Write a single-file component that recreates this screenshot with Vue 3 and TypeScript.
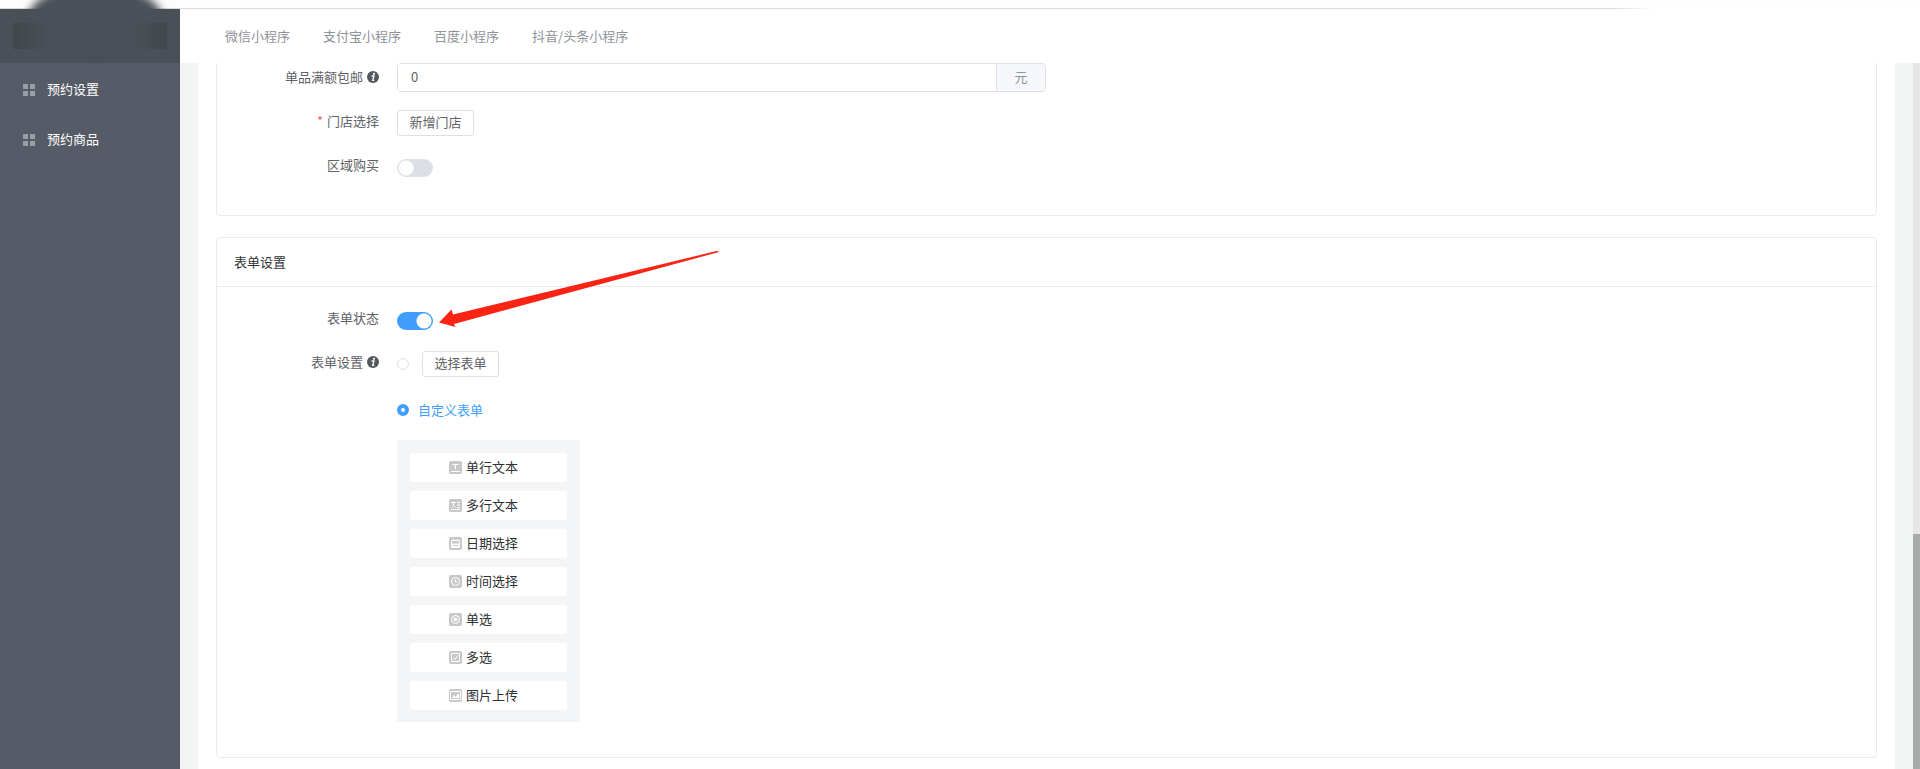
<script setup lang="ts">
import { ref } from 'vue'

interface FieldType {
  key: string
  label: string
}

const tabs: string[] = ['微信小程序', '支付宝小程序', '百度小程序', '抖音/头条小程序']
const menu: string[] = ['预约设置', '预约商品']
const fieldTypes: FieldType[] = [
  { key: 'text', label: '单行文本' },
  { key: 'textarea', label: '多行文本' },
  { key: 'date', label: '日期选择' },
  { key: 'time', label: '时间选择' },
  { key: 'radio', label: '单选' },
  { key: 'check', label: '多选' },
  { key: 'image', label: '图片上传' },
]

const freeShipping = ref('0')
const areaLimit = ref(false)
const formEnabled = ref(true)
const formMode = ref('custom')
</script>

<template>
  <div class="page">
    <div class="topbar"></div>
    <div class="shell">
      <aside class="sidebar">
        <div class="brand">
          <div class="brand-halo"></div>
          <div class="brand-box"></div>
        </div>
        <nav class="menu">
          <a v-for="item in menu" :key="item" href="#" class="menu-item">
            <svg class="menu-icon" viewBox="0 0 12 12" aria-hidden="true">
              <path d="M0 0h5v5H0zM7 0h5v5H7zM0 7h5v5H0zM7 7h5v5H7z" fill="#9a9ea5" />
            </svg>
            <span class="caption">{{ item }}</span>
          </a>
        </nav>
      </aside>

      <div class="main">
        <nav class="tabs">
          <a v-for="tab in tabs" :key="tab" href="#" class="tab">{{ tab }}</a>
        </nav>

        <div class="viewport">
          <main class="content">
            <section class="card card-continued">
              <div class="form">
                <div class="row">
                  <label class="label label-tall" for="free-shipping">
                    单品满额包邮
                    <svg class="info" viewBox="0 0 12 12" aria-hidden="true">
                      <circle cx="6" cy="6" r="6" fill="#55585d" />
                      <circle cx="7" cy="2.8" r="1.1" fill="#fff" />
                      <path d="M4.6 5h2.4L5.7 9.4h1.5" fill="none" stroke="#fff" stroke-width="1.3" />
                    </svg>
                  </label>
                  <div class="input-group">
                    <input id="free-shipping" v-model="freeShipping" type="text" class="input" />
                    <span class="unit">元</span>
                  </div>
                </div>
                <div class="row">
                  <span class="label"><span class="required">*</span>门店选择</span>
                  <button type="button" class="button">新增门店</button>
                </div>
                <div class="row">
                  <label class="label" for="area-limit">区域购买</label>
                  <input id="area-limit" v-model="areaLimit" type="checkbox" role="switch" class="switch" />
                </div>
              </div>
            </section>

            <section class="card">
              <h2 class="card-title">表单设置</h2>
              <div class="form form-padded">
                <div class="row">
                  <label class="label" for="form-enabled">表单状态</label>
                  <div class="pointed">
                    <input id="form-enabled" v-model="formEnabled" type="checkbox" role="switch" class="switch" />
                    <svg class="arrow" viewBox="438 250 282 78" aria-hidden="true">
                      <path d="M439 322.5L451.5 309.5L453 314.5L717.500 250.800L719 252L454 324L455.500 327Z" fill="#fb2314" />
                    </svg>
                  </div>
                </div>
                <div class="row">
                  <span class="label">
                    表单设置
                    <svg class="info" viewBox="0 0 12 12" aria-hidden="true">
                      <circle cx="6" cy="6" r="6" fill="#55585d" />
                      <circle cx="7" cy="2.8" r="1.1" fill="#fff" />
                      <path d="M4.6 5h2.4L5.7 9.4h1.5" fill="none" stroke="#fff" stroke-width="1.3" />
                    </svg>
                  </span>
                  <div class="options">
                    <div class="option option-existing">
                      <input v-model="formMode" type="radio" name="form-mode" value="existing" class="radio" aria-label="选择表单" />
                      <button type="button" class="button">选择表单</button>
                    </div>
                    <label class="option option-custom">
                      <input v-model="formMode" type="radio" name="form-mode" value="custom" class="radio" />
                      自定义表单
                    </label>
                    <div class="palette">
                      <button v-for="field in fieldTypes" :key="field.key" type="button" class="field">
                        <svg class="field-icon" viewBox="0 0 13 13" aria-hidden="true">
                          <rect width="13" height="13" rx="2" fill="#c8c8c8" />
                          <g fill="none" stroke="#fff" stroke-width="1">
                            <path v-if="field.key === 'text'" d="M3.5 3.5h6M6.5 3.5v5M2 10.5h9" />
                            <path v-else-if="field.key === 'textarea'" d="M2 3.5h5M4.5 3.5v3M2.5 8.5l2-2 2 2M8 3.5h3M8 6h3M8 8.5h3M2 10.5h9" />
                            <g v-else-if="field.key === 'date'">
                              <path d="M2.5 3.5h8v7h-8zM4.5 2v2M8.5 2v2" />
                              <path d="M3 6.5h7v4H3z" fill="#fff" stroke="none" />
                              <path d="M4 8.5h5" stroke="#c8c8c8" />
                            </g>
                            <g v-else-if="field.key === 'time'">
                              <circle cx="6.5" cy="6.5" r="4" />
                              <path d="M6.500 4.500v2.500h2" />
                            </g>
                            <g v-else-if="field.key === 'radio'">
                              <circle cx="6.5" cy="6.5" r="4" />
                              <circle cx="6.5" cy="6.5" r="2" fill="#fff" stroke="none" />
                            </g>
                            <path v-else-if="field.key === 'check'" d="M2.5 2.5h8v8h-8zM4.5 6.5l1.5 2 3-4" />
                            <g v-else>
                              <path d="M1.5 2.5h10v8h-10z" />
                              <path d="M3 9l2-3 2 2 1.500-3L10 5v4z" fill="#fff" stroke="none" />
                            </g>
                          </g>
                        </svg>
                        <span class="caption">{{ field.label }}</span>
                      </button>
                    </div>
                  </div>
                </div>
              </div>
            </section>
          </main>
          <div class="scroll-track"><div class="scroll-thumb"></div></div>
        </div>
      </div>
    </div>
  </div>
</template>

<style>
body {
  margin: 0;
}
</style>

<style scoped>
.page,
.page * {
  box-sizing: border-box;
}

.page {
  display: flex;
  flex-direction: column;
  min-height: 100vh;
  overflow: hidden;
  background: #fff;
  color: #606266;
  font-family: "Noto Sans CJK SC", sans-serif;
  font-size: 13px;
  line-height: 22px;
}

.page a {
  text-decoration: none;
}

.page button,
.page input {
  margin: 0;
  font: inherit;
}

.topbar {
  height: 9px;
  background:
    linear-gradient(to right, #d8dadb 84%, transparent 86%) bottom / 100% 1px no-repeat,
    #fdfdfd;
}

.shell {
  display: flex;
  flex: 1;
}

.sidebar {
  flex: 0 0 180px;
  background: #565c67;
}

.brand {
  position: relative;
  height: 54px;
  padding: 14px 13px;
  background: #495057;
}

.brand-halo {
  position: absolute;
  top: -24px;
  left: 28px;
  width: 134px;
  height: 66px;
  border-radius: 50%;
  background: #495057;
  filter: blur(4px);
}

.brand-box {
  position: relative;
  height: 26px;
  background: linear-gradient(to right, #41474c, #495057 24%, #495057 78%, #41474c);
}

.menu {
  padding-top: 2px;
}

.menu-item {
  display: flex;
  align-items: center;
  gap: 12px;
  height: 50px;
  padding-left: 23px;
  color: #fff;
}

.menu-icon {
  width: 12px;
  height: 12px;
}

.caption {
  padding-bottom: 2px;
}

.main {
  display: flex;
  flex: 1;
  flex-direction: column;
  min-width: 0;
}

.tabs {
  display: flex;
  align-items: center;
  gap: 33px;
  height: 54px;
  padding-left: 45px;
}

.tab {
  color: #909399;
}

.viewport {
  display: flex;
  flex: 1;
  background: #f2f3f3;
}

.content {
  flex: 1;
  min-width: 0;
  margin: 0 18px;
  padding: 0 18px 11px;
  background: #fff;
}

.scroll-track {
  display: flex;
  flex-direction: column;
  justify-content: flex-end;
  width: 7px;
  background: #e6e6e6;
}

.scroll-thumb {
  height: 33.3%;
  background: #a8a9a9;
}

.card {
  border: 1px solid #ebebed;
  border-radius: 4px;
}

.card-continued {
  margin-bottom: 21px;
  border-top: 0;
  border-top-left-radius: 0;
  border-top-right-radius: 0;
}

.card-title {
  height: 49px;
  margin: 0;
  padding-left: 17px;
  border-bottom: 1px solid #ebebed;
  color: #303133;
  font-size: 13px;
  font-weight: 400;
  line-height: 48px;
}

.form {
  display: flex;
  flex-direction: column;
  gap: 18px;
  padding-bottom: 35px;
}

.form-padded {
  padding-top: 20px;
}

.row {
  display: flex;
  align-items: flex-start;
  gap: 18px;
  min-height: 26px;
}

.label {
  display: flex;
  flex: 0 0 162px;
  align-items: center;
  justify-content: flex-end;
  gap: 4px;
}

.label-tall {
  height: 27px;
}

.info {
  width: 12px;
  height: 12px;
}

.required {
  color: #f56c6c;
}

.input-group {
  display: flex;
  flex: 0 1 649px;
  height: 29px;
  border: 1px solid #dcdfe6;
  border-radius: 4px;
  overflow: hidden;
}

.input {
  flex: 1;
  min-width: 0;
  padding: 0 13px 2px;
  border: 0;
  outline: 0;
  background: #fff;
  color: #606266;
}

.unit {
  flex: 0 0 49px;
  border-left: 1px solid #dcdfe6;
  background: #f5f7fa;
  color: #909399;
  line-height: 26px;
  text-align: center;
}

.button {
  width: 77px;
  height: 26px;
  padding: 0 0 2px;
  border: 1px solid #dcdfe6;
  border-radius: 3px;
  background: #fff;
  color: #606266;
}

.page .switch {
  display: block;
  appearance: none;
  width: 36px;
  height: 18px;
  margin-top: 5px;
  border-radius: 9px;
  background: radial-gradient(circle at 9px 9px, #fff 7px, transparent 8px) #dcdfe6;
}

.page .switch:checked {
  background: radial-gradient(circle at 27px 9px, #fff 7px, transparent 8px) #409eff;
}

.pointed {
  position: relative;
}

.arrow {
  position: absolute;
  right: -287px;
  bottom: 2px;
  width: 282px;
  height: 78px;
}

.options {
  display: flex;
  flex-direction: column;
  align-items: flex-start;
}

.option {
  display: flex;
  align-items: center;
  height: 26px;
}

.option-existing {
  gap: 13px;
  margin-bottom: 20px;
}

.option-custom {
  gap: 9px;
  margin-bottom: 17px;
  color: #409eff;
}

.radio {
  appearance: none;
  width: 12px;
  height: 12px;
  border: 1px solid #dcdfe6;
  border-radius: 50%;
  background: #fff;
}

.radio:checked {
  border: 4px solid #409eff;
}

.palette {
  display: flex;
  flex-direction: column;
  gap: 9px;
  width: 183px;
  padding: 13px 13px 12px;
  background: #f3f5f6;
}

.field {
  display: flex;
  align-items: center;
  gap: 4px;
  height: 29px;
  padding: 0 0 0 39px;
  border: 0;
  border-radius: 3px;
  background: #fff;
  color: #303133;
}

.field-icon {
  width: 13px;
  height: 13px;
}
</style>
